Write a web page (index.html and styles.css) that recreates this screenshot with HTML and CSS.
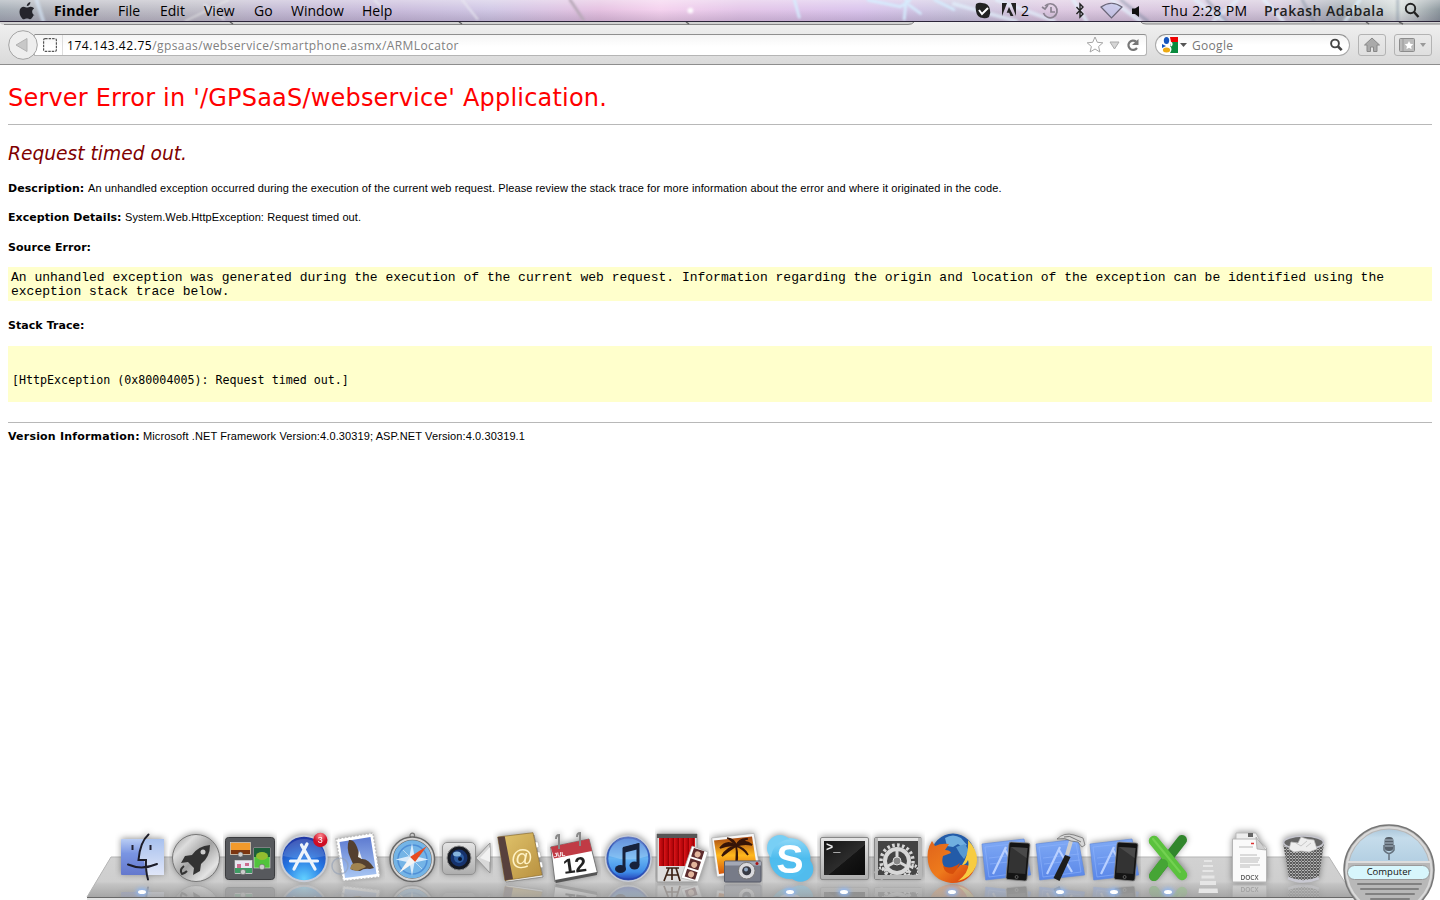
FILE: index.html
```html
<!DOCTYPE html>
<html lang="en">
<head>
<meta charset="utf-8">
<title>Request timed out.</title>
<link rel="stylesheet" href="styles.css">
</head>
<body>
<div class="screen">
  <header class="menubar">
    <svg class="streaks" width="1440" height="22" viewBox="0 0 1440 22">
      <g fill="none" stroke-linecap="round" class="soft">
        <path d="M4 0l7 22" stroke="#dcecff" stroke-width="4" opacity=".6"/>
        <path d="M160 22L205 0" stroke="#eef0ee" stroke-width="2" opacity=".6"/>
        <path d="M180 5l20 15M358 0l10 10M450 0l16 20" stroke="#eef0f4" stroke-width="2" opacity=".7"/>
        <path d="M563 0l14 21" stroke="#b8a9b8" stroke-width="3"/>
        <path d="M798 0l5 18M875 0l34 7 10-7M915 0l-2 20M918 5l12 9M945 0l20 10" stroke="#d5efff" stroke-width="3" opacity=".85"/>
        <path d="M965 4l65 18M1010 0l60 22M1090 0l14 22M1130 0l30 22M1218 0l30 22M1262 0l-25 22M1290 0l20 22M1375 22l15-22" stroke="#e4f4ff" stroke-width="4" opacity=".65"/>
        <path d="M1140 0l28 22M1230 0l20 22M1330 0l12 22M1430 0v22" stroke="#6d8296" stroke-width="3" opacity=".4"/>
      </g>
      <circle cx="689" cy="11" r="3" fill="#fff" opacity=".9" class="soft"/>
    </svg>
    <svg class="apple" width="18" height="20" viewBox="0 0 18 20"><path d="M12.4 1c.2 2-1.600 4.200-3.600 4.100C8.600 3.200 10.400 1.200 12.400 1zM15.600 14.300c-1 2.300-2.300 4-3.700 4-1.100 0-1.500-.7-2.900-.7s-1.900.7-2.900.7C3.800 18.300 1.500 14.200 1.500 10.700c0-3.300 2.200-5 4.200-5 1.300 0 2.300.8 3.300.8.900 0 2.300-.9 3.900-.8 1.200 0 2.500.7 3.200 1.800-2.900 1.700-2.400 5.700.6 6.800z" fill="#25252c"/></svg>
    <nav class="menus"><b>Finder</b><span>File</span><span>Edit</span><span>View</span><span>Go</span><span>Window</span><span>Help</span></nav>
    <div class="status">
      <svg width="130" height="22" viewBox="0 0 130 22" class="extras-a">
        <path d="M3 4q3-2 6-1 7 0 8 7 1 3-1 7-3 2-6 1-6 0-7-7-1-4 0-7z" fill="#222"/><path d="M6 10l3 4 6-6" stroke="#fff" stroke-width="2" fill="none"/>
        <path d="M29 3h5l-5 13zM38 3h5v13zM36 7l4.500 9h-3l-1.300-3.200h-2.500z" fill="#222"/>
        <g fill="none" stroke="#8a8290" stroke-width="1.700"><path d="M72 6a7 7 0 1 1-1.500 7M78 7v5h4"/><path d="M69 7l3 2 3-4"/></g>
        <path d="M103.500 7l6.500 7-3 3V4l3 3-6.500 7" fill="none" stroke="#222" stroke-width="1.400"/>
      </svg>
      <span class="two">2</span>
      <svg width="44" height="22" viewBox="0 0 44 22" class="wifi"><path d="M1 7Q11.500-.5 22 7L11.500 18z" fill="#b5c4ee" fill-opacity=".5" stroke="#696577" stroke-width="1.200"/><path d="M32 8.500h3L39 6v11l-4-3h-3z" fill="#111"/></svg>
      <span class="clock">Thu 2:28 PM</span>
      <b class="user">Prakash Adabala</b>
      <svg width="16" height="22" viewBox="0 0 16 22" class="spot"><circle cx="6.500" cy="8.500" r="4.700" fill="none" stroke="#222" stroke-width="1.900"/><path d="M10 12l4.500 5" stroke="#222" stroke-width="2.400"/></svg>
    </div>
  </header>

  <div class="toolbar">
    <svg class="tabs" width="1440" height="5" viewBox="0 0 1440 5"><path d="M0 0h914q-2 3-6 3H4Q1 3 0 1zM1141 0h299v2H1146q-4 0-5-2z" fill="#d2d2d2"/><path d="M4 2.500h904q4 0 6-2.500M1141 0q1 2 5 2h294" fill="none" stroke="#858585"/><path d="M230 0l3 2M459 0l3 2M686 0l3 2M1366 0l3 2M1399 0l4 2" stroke="#666" stroke-width="1.500"/></svg>
    <div class="nav">
      <svg class="back" width="31" height="31" viewBox="0 0 31 31"><circle cx="15" cy="15" r="14.300" fill="#eee" stroke="#a4a4a4"/><path d="M19 8.500v13L8 15z" fill="#c8c8c8" stroke="#b2b2b2"/></svg>
      <div class="url">
        <svg width="14" height="14" viewBox="0 0 14 14"><rect x=".6" y=".6" width="12.800" height="12.800" rx="1.500" fill="none" stroke="#555" stroke-width="1.200" stroke-dasharray="2.500 1"/></svg>
        <span class="address"><em>174.143.42.75</em>/gpsaas/webservice/smartphone.asmx/ARMLocator</span>
        <svg class="urlicons" width="56" height="18" viewBox="0 0 56 18"><path d="M9 1l2.300 5.300 5.500.5-4.200 3.700 1.300 5.500L9 13l-4.900 3 1.300-5.500L1.200 6.800l5.500-.5z" fill="#fff" stroke="#a5a5a5"/><path d="M24 6h9l-4.500 7z" fill="#d5d5d5" stroke="#aaa"/><path d="M50 5.500A4.700 4.700 0 1 0 51 12" fill="none" stroke="#777" stroke-width="2.200"/><path d="M52.500 3v6H46z" fill="#777"/></svg>
      </div>
      <div class="search">
        <svg width="26" height="18" viewBox="0 0 26 18"><rect x="0" y="1" width="16" height="16" rx="1.500" fill="#fff"/><path d="M8 1h8v5H9z" fill="#e00"/><path d="M9 6h7v11H8q3-4 0-7z" fill="#098b3e"/><ellipse cx="4.500" cy="4.500" rx="2.700" ry="3.500" fill="#1655bd"/><path d="M0 8l4 2-4 2z" fill="#1655bd"/><ellipse cx="4.500" cy="14" rx="3.600" ry="2.500" fill="#edaa13"/><path d="M7 7q4-1 2 3" stroke="#fff" stroke-width="2" fill="none"/><path d="M18 7h7l-3.500 4z" fill="#555"/></svg>
        <span>Google</span>
        <svg width="14" height="14" viewBox="0 0 14 14"><circle cx="6" cy="5.500" r="3.900" fill="none" stroke="#444" stroke-width="1.900"/><path d="M9 8.500l3.700 3.700" stroke="#444" stroke-width="2.600"/></svg>
      </div>
      <div class="tool home"><svg width="18" height="16" viewBox="0 0 18 16"><path d="M9 1l7.500 7H14v6.500h-3.500V10h-3v4.500H4V8H1.500z" fill="#aaa" stroke="#888"/></svg></div>
      <div class="tool marks"><svg width="28" height="16" viewBox="0 0 28 16"><rect x=".5" y="1.500" width="15" height="13" rx="1" fill="#bbb" stroke="#8c8c8c"/><path d="M4 2v12" stroke="#999"/><path d="M10 4l1.300 2.800 3 .4-2.200 2 .5 3.100L10 10.800l-2.600 1.500.5-3.100-2.200-2 3-.4z" fill="#fff"/><path d="M21 6h6l-3 4z" fill="#999"/></svg></div>
    </div>
  </div>

  <main class="page">
    <h1><span>Server Error in '/GPSaaS/webservice' Application.</span></h1>
    <hr>
    <h2>Request timed out.</h2>
    <p class="row desc"><b>Description:</b><span>An unhandled exception occurred during the execution of the current web request. Please review the stack trace for more information about the error and where it originated in the code.</span></p>
    <p class="row exc"><b>Exception Details:</b><span>System.Web.HttpException: Request timed out.</span></p>
    <p class="row src"><b>Source Error:</b></p>
    <div class="code source">An unhandled exception was generated during the execution of the current web request. Information regarding the origin and location of the exception can be identified using the<br>exception stack trace below.</div>
    <p class="row stk"><b>Stack Trace:</b></p>
    <div class="code trace">[HttpException (0x80004005): Request timed out.]</div>
    <hr class="last">
    <p class="row ver"><b>Version Information:</b><span>Microsoft .NET Framework Version:4.0.30319; ASP.NET Version:4.0.30319.1</span></p>
  </main>

  <footer class="dock">
    <svg class="shelf" width="1440" height="50" viewBox="0 0 1440 50">
      <defs>
        <linearGradient id="shelf" x2="0" y2="1"><stop offset="0" stop-color="#d2d2d2"/><stop offset=".62" stop-color="#cecece"/><stop offset=".68" stop-color="#c3c3c3"/><stop offset="1" stop-color="#a6a6a6"/></linearGradient>
      </defs>
      <path d="M111 7h1218l25 40H87z" fill="url(#shelf)"/><path d="M87 47L111 7h1218l25 40" fill="none" stroke="#b5b5b5"/><path d="M87 47.500h1267" stroke="#696969"/><path d="M87 49h1267" stroke="#e3e3e3" stroke-width="2"/>
      <g fill="#e6e6e6"><path d="M1204 10h8v2h-8zM1203 15h10v2h-10zM1202.500 20h11v2h-11zM1201.500 25.500h13v3h-13zM1200 31h16v4h-16zM1199 38.500h18.500l.5 4.500h-19.500z"/></g>
    </svg>
    <svg width="0" height="0" class="defs">
      <defs>
        <linearGradient id="blue" x2="0" y2="1"><stop offset="0" stop-color="#b9cdf4"/><stop offset=".4" stop-color="#7a95e2"/><stop offset="1" stop-color="#6478cd"/></linearGradient>
        <linearGradient id="facer" x2="0" y2="1"><stop offset="0" stop-color="#a8c1ee"/><stop offset="1" stop-color="#e0e6f8"/></linearGradient>
        <linearGradient id="metal" x2="1" y2="1"><stop offset="0" stop-color="#909090"/><stop offset=".25" stop-color="#ddd"/><stop offset=".5" stop-color="#a2a2a2"/><stop offset=".78" stop-color="#e4e4e4"/><stop offset="1" stop-color="#888"/></linearGradient>
        <radialGradient id="orb" cy=".95" r=".95"><stop offset="0" stop-color="#62d0ff"/><stop offset=".5" stop-color="#2475e2"/><stop offset="1" stop-color="#2032a0"/></radialGradient>
        <linearGradient id="tunes" x2="0" y2="1"><stop offset="0" stop-color="#3a6fd0"/><stop offset=".5" stop-color="#67b3f2"/><stop offset=".8" stop-color="#3f8de8"/><stop offset="1" stop-color="#2136b0"/></linearGradient>
        <radialGradient id="red" cy=".2"><stop offset="0" stop-color="#ff8a91"/><stop offset="1" stop-color="#cf0d24"/></radialGradient>
        <linearGradient id="sky" x2="0" y2="1"><stop offset="0" stop-color="#5d7ad0"/><stop offset="1" stop-color="#a9c7f3"/></linearGradient>
        <linearGradient id="gold" x2="1" y2="1"><stop offset="0" stop-color="#e3c66e"/><stop offset="1" stop-color="#b78f3e"/></linearGradient>
        <linearGradient id="silver" x2="0" y2="1"><stop offset="0" stop-color="#e5e5e5"/><stop offset="1" stop-color="#adadad"/></linearGradient>
        <linearGradient id="black" x2="1" y2="1"><stop offset="0" stop-color="#151515"/><stop offset=".55" stop-color="#2c2c2c"/><stop offset=".56" stop-color="#151515"/><stop offset="1" stop-color="#0a0a0a"/></linearGradient>
        <linearGradient id="sunset" x2="0" y2="1"><stop offset="0" stop-color="#a44410"/><stop offset=".5" stop-color="#ffb81d"/><stop offset="1" stop-color="#d3560d"/></linearGradient>
        <linearGradient id="curtain" x2=".14" spreadMethod="repeat"><stop offset="0" stop-color="#d91519"/><stop offset=".7" stop-color="#b20409"/><stop offset="1" stop-color="#8a0003"/></linearGradient>
        <linearGradient id="skype" x2="0" y2="1"><stop offset="0" stop-color="#8bd6f7"/><stop offset=".5" stop-color="#4dbcee"/><stop offset="1" stop-color="#53c0f0"/></linearGradient>
        <linearGradient id="fox" x2="1" y2="1"><stop offset="0" stop-color="#e0641b"/><stop offset=".5" stop-color="#ee7b1c"/><stop offset="1" stop-color="#d3330a"/></linearGradient>
        <linearGradient id="print" x2="0" y2="1"><stop offset="0" stop-color="#80aaf5"/><stop offset="1" stop-color="#5986e8"/></linearGradient>
        <pattern id="mesh" width="3" height="3" patternUnits="userSpaceOnUse"><path d="M0 0l3 3M3 0L0 3" stroke="#555" stroke-width="1.100"/></pattern>
        <g id="plan"><path d="M3 14L45 9l6.700 36L6.700 50z" fill="url(#print)" stroke="#5c86dc" stroke-width=".6"/><path d="M6 17l37-4 5 29-38 5zM10 28l36-4M11 34l36-4" fill="none" stroke="#8fb3fb" stroke-width=".6"/><path d="M14 44L27 17M26 20l13 22" stroke="#b9d0ff" stroke-width="2.200"/></g>
        <g id="phone"><path d="M32 12l17 1q2 0 2 2l-3 34q0 2-2 2l-17-1.500q-2 0-2-2L30 14q0-2 2-2z" fill="#141414" stroke="#888" stroke-width=".8"/><path d="M31.500 17l17 1-2.200 26-17-1.200z" fill="#333"/><path d="M32 17l16.500 1-1 10z" fill="#494949"/><circle cx="37.600" cy="47" r="1.500" fill="none" stroke="#888" stroke-width=".6"/></g>
      </defs>
    </svg>
    <div class="icons">
      <div class="app on"><svg viewBox="0 0 54 54"><rect x="6" y="9" width="43" height="36" rx="1" fill="url(#blue)"/><path d="M28 9h21v36H31l-2-16h-5q0-12 4-20z" fill="url(#facer)"/><path d="M17.500 15v5M35.500 15v5" stroke="#223" stroke-width="2"/><path d="M33.500 4q-8 9-9.500 15.500h7.500q-1 20 2 30M13 34q14 7 29 0" transform="translate(-.5)" fill="none" stroke="none"/><path d="M33.500 4.500Q25 12 23.500 30h7.500q-.5 11 2 19.500M13 34.500q14 6 29-.5" fill="none" stroke="#1c1c28" stroke-width="2" stroke-linecap="round"/></svg></div>
      <div class="app"><svg viewBox="0 0 54 54"><circle cx="27" cy="28" r="23.500" fill="url(#metal)" stroke="#777"/><path d="M41 15q-12 1-18 10l-7 1-4 7 7-1 6 6-1 7 7-4 1-7q9-7 9-19z" fill="#333"/><path d="M15 36q-5 4-2 8 3-1 5-3" fill="none" stroke="#333" stroke-width="2"/><circle cx="34" cy="22" r="2.500" fill="#ccc"/></svg></div>
      <div class="app"><svg viewBox="0 0 54 54"><rect x="2.500" y="7.500" width="49" height="42" rx="3" fill="#57595d" stroke="#3a3b3e"/><rect x="7.500" y="12.500" width="20" height="12" fill="#f29a2b" stroke="#ddd" stroke-width=".6"/><path d="M8 20h19v4H8z" fill="#7b3510"/><rect x="31" y="18" width="16" height="20" fill="#52c43c" stroke="#ddd" stroke-width=".6"/><path d="M31 18h16v9H31z" fill="#1d5f3a"/><ellipse cx="39" cy="26" rx="6" ry="4" fill="#93bd30"/><rect x="12" y="30.500" width="17" height="13" fill="#e9e8f2" stroke="#ddd" stroke-width=".6"/><path d="M12 38h17v5H12z" fill="#3f9c64"/><path d="M14 34h4v4h-4zM22 33h4v3h-4z" fill="#cc6d8f"/><g fill="#ccc" stroke="#555" stroke-width=".5"><circle cx="17.500" cy="24.500" r="2.500"/><circle cx="39" cy="37" r="2.800"/><circle cx="20" cy="42" r="2.700"/></g></svg></div>
      <div class="app"><svg viewBox="0 0 54 54"><circle cx="27" cy="28.500" r="22.700" fill="url(#orb)" stroke="#c8cdd8" stroke-width="2"/><path d="M6 26a21.500 21.500 0 0 1 42 0q-21 5-42 0z" fill="#fff" opacity=".15"/><g stroke="#eef4fb" stroke-width="3.200" stroke-linecap="round"><path d="M13.500 31h27M30 14L17 39M24.500 15L38 39"/></g><circle cx="43.300" cy="10" r="7.200" fill="url(#red)"/><text x="43.300" y="13.300" class="badge">3</text></svg></div>
      <div class="app"><svg viewBox="0 0 54 54"><path d="M5 9l37-6 7 44-37 4z" fill="#fff" stroke="#bbb" stroke-width="1.500" stroke-dasharray="2 1.500"/><path d="M8.500 12L39.500 7l6 37-31.500 4z" fill="url(#sky)"/><path d="M18 10q5-1 8 7l4 12q7-1 13 9l-4 1q-6-1-10 2l-8-1q-3-3 1-6l-3-7q-4-9-1-17z" fill="#54402f"/><path d="M21 34q9-3 14 3l-9 4-7-2z" fill="#a18450"/><path d="M28 20l3 9-4-2z" fill="#eee"/><circle cx="9" cy="36" r="8" fill="none" stroke="#919eb4" stroke-width="1.500" opacity=".6"/></svg></div>
      <div class="app"><svg viewBox="0 0 54 54"><circle cx="27.300" cy="5.500" r="2.300" fill="none" stroke="#777" stroke-width="1.200"/><circle cx="27.300" cy="29.300" r="21" fill="#74b4e6" stroke="#666" stroke-width="4"/><circle cx="27.300" cy="29.300" r="20.500" fill="none" stroke="#d5d5d5" stroke-width="2"/><circle cx="27.500" cy="29.500" r="14.500" fill="none" stroke="#4f8fd6" stroke-width="1.500"/><path d="M27 13l2.500 13 14 3.500-14 3L27 46l-2.500-13.500-14-3 14-3.500z" fill="#d9ebfb"/><path d="M18 20l19 19M37 20L18 39" stroke="#b9d9f3"/><path d="M42 16L25 27l5 5z" fill="#e74b20"/><path d="M14 43l11-16 5 5z" fill="#f4f4f4"/></svg></div>
      <div class="app"><svg viewBox="0 0 54 54"><path d="M37 28L51 13v30z" fill="#d8d8d8" stroke="#949494"/><path d="M41 28l10-11v15z" fill="#f1f1f1"/><rect x="3.500" y="12.500" width="33" height="32" rx="4.500" fill="url(#silver)" stroke="#929292"/><circle cx="20" cy="28" r="12" fill="#151820" stroke="#888"/><circle cx="20" cy="28" r="8.500" fill="#16326c"/><circle cx="20" cy="28" r="5" fill="#2c5ca0"/><ellipse cx="18" cy="24" rx="4" ry="2.500" fill="#86b4dd"/><circle cx="21" cy="29" r="2" fill="#061330"/></svg></div>
      <div class="app"><svg viewBox="0 0 54 54"><path d="M41 5l9 42-37 5-1-3z" fill="#eee" stroke="#777" stroke-width=".7"/><path d="M42 12l3 0 1 5-3 1zM44 22l3 0 1 5-3 1zM46 32l3 0 1 5-3 1z" fill="#fff" stroke="#aaa" stroke-width=".5"/><path d="M4.700 7L40 2.700 49 45 12 50.500z" fill="url(#gold)" stroke="#816124" stroke-width=".6"/><path d="M4.700 7l7-.8L20 49l-8 1.500z" fill="#58413d"/><text x="29" y="35" class="at">@</text></svg></div>
      <div class="app"><svg viewBox="0 0 54 54"><path d="M3.700 17L42 9l8.500 34L8 52z" fill="#fff" stroke="#777"/><path d="M3.700 17L42 9l3 12-38 7.500z" fill="#c03b45"/><path d="M8 50l42-8v3L9 53z" fill="#555"/><path d="M12 19V5q-3 0-3 4M33 16V3q-3 0-3 4" fill="none" stroke="#888" stroke-width="2"/><g transform="rotate(-8 27 30)"><text x="13.500" y="24.500" class="jul">JUL</text><text x="27" y="42.500" class="day">12</text></g></svg></div>
      <div class="app"><svg viewBox="0 0 54 54"><circle cx="27.300" cy="28.500" r="22.500" fill="url(#tunes)" stroke="#c8cdd8" stroke-width="2"/><circle cx="27.300" cy="28.500" r="21" fill="none" stroke="#2340a8" stroke-width="2" opacity=".7"/><path d="M8 26a19.500 19.500 0 0 1 39 0q-19 7-39 0z" fill="#fff" opacity=".2"/><path d="M23 40V19l14-4v20" fill="none" stroke="#17223c" stroke-width="3"/><path d="M22 17l16-4v6l-16 4z" fill="#17223c"/><ellipse cx="19.500" cy="39" rx="5.500" ry="4" fill="#17223c"/><ellipse cx="33.500" cy="35.500" rx="5" ry="4" fill="#17223c"/></svg></div>
      <div class="app"><svg viewBox="0 0 54 54"><path d="M2 4h40v48H2z" fill="#ddd" stroke="#999"/><path d="M2 4h40v4H2z" fill="#555"/><path d="M4 8h36v28H4z" fill="url(#curtain)"/><path d="M11 38h13M14 38L9 51M21 38l4 13M17 38v12M11 45h12" stroke="#3c2316" stroke-width="1.700"/><path d="M37 16l16 6-10 30-17-4z" fill="#fff" stroke="#aaa" stroke-width=".7"/><g transform="rotate(18 40 34)"><path d="M34 19h11v9H34zM34 30h11v9H34zM34 41h11v8H34z" fill="#5d2c2e"/><g fill="#e3b59c"><circle cx="39.500" cy="24" r="3"/><circle cx="39.500" cy="35" r="3"/><circle cx="39.500" cy="45" r="3"/></g></g></svg></div>
      <div class="app"><svg viewBox="0 0 54 54"><path d="M2.700 8L45 3.300 51 40 8 47z" fill="#f6f6f6" stroke="#aaa" stroke-width=".7"/><path d="M5 10.500l38-4L48 38l-38 6z" fill="url(#sunset)"/><path d="M26 40q4-12 1-24M27 16q-9-7-16 2 9-4 16-2 8-8 16-1-8-2-16 1-9 1-14 10 9-7 14-10 8 1 12 9-5-7-12-9-1-7-9-8M27 16q3-8 12-7" fill="#371508" stroke="#371508" stroke-width="1.700"/><rect x="15.500" y="31" width="36.500" height="21" rx="1" fill="#777b88" stroke="#555966"/><path d="M16 31.500h36v4H16z" fill="#a3a8b5"/><circle cx="37.700" cy="40.700" r="8.300" fill="#d9d9dd" stroke="#777"/><circle cx="37.700" cy="40.700" r="4.500" fill="#373a44"/><circle cx="37" cy="39.500" r="2" fill="#90a7c2"/><circle cx="48" cy="33.500" r="1.500" fill="#a11"/></svg></div>
      <div class="app on"><svg viewBox="0 0 54 54"><circle cx="27" cy="28.500" r="20.500" fill="url(#skype)"/><circle cx="17" cy="18" r="13" fill="#78cff5"/><circle cx="37.500" cy="39" r="12.800" fill="#51bced"/><circle cx="27" cy="28.500" r="19" fill="url(#skype)"/><text x="27" y="43" class="skype">S</text></svg></div>
      <div class="app on"><svg viewBox="0 0 54 54"><rect x="3.500" y="7.500" width="48" height="42" rx="1.500" fill="url(#silver)" stroke="#888"/><rect x="7" y="11" width="41" height="34" fill="url(#black)"/><text x="9" y="21" class="prompt">&gt;_</text></svg></div>
      <div class="app"><svg viewBox="0 0 54 54"><rect x="3.500" y="7.500" width="47" height="42" rx="1.500" fill="url(#silver)" stroke="#888"/><rect x="7" y="11" width="40" height="34" fill="#444"/><g fill="none" stroke="#d7d7d7"><circle cx="26" cy="31" r="12" stroke-width="4"/><circle cx="26" cy="31" r="16" stroke-width="3.500" stroke-dasharray="2.600 2.400"/><path d="M26 31V19M26 31l11 6M26 31l-11 6" stroke-width="3"/><circle cx="10" cy="43" r="5" stroke-width="3" stroke-dasharray="2 1"/><circle cx="42" cy="41" r="5.500" stroke-width="3" stroke-dasharray="2 1"/></g><circle cx="26" cy="31" r="4" fill="#888" stroke="#ddd"/><path d="M4 45h46v4H4zM47 8h4v41h-4zM4 8h3v41H4z" fill="#b7b7b7"/></svg></div>
      <div class="app on"><svg viewBox="0 0 54 54"><circle cx="28" cy="25.500" r="22" fill="#235ba8"/><path d="M20 8q8-5 16 0l6 7-5 2-4-3-5 3-6-1z" fill="#70afe0"/><path d="M31 17l9-3 4 7-5 8-4-5z" fill="#5799d2"/><path d="M46 15q8 13 4 23-7 16-24 15Q6 50 3 32q-2-12 4-21l3 5q6-3 14-2l-4 6q5 0 6 3l-8 3q-3 11 7 14 7 1 10-5 5-1 9 1 4-7 2-22z" fill="url(#fox)"/><path d="M18 36q8 4 17-3l-3 6-4 5q-8 0-10-8z" fill="#d74f0c"/><path d="M43 10q12 13 8 26-5 12-18 15 13-10 10-21-2 5-6 5 7-10 6-25z" fill="#f7cc41"/></svg></div>
      <div class="app"><svg viewBox="0 0 54 54"><use href="#plan"/><use href="#phone"/></svg></div>
      <div class="app on"><svg viewBox="0 0 54 54"><use href="#plan"/><path d="M38 11L34 25" stroke="#ccc" stroke-width="4"/><path d="M32 25l5.500 2-11 24-6-3z" fill="#1d1d1d"/><path d="M24 9q7-7 17-4l9 3 2 7-3 2-4-5-7-1q-6-4-14-2z" fill="#d5d5d5" stroke="#666" stroke-width=".7"/><path d="M31 7q6-2 11 2l6 3" stroke="#777" fill="none"/></svg></div>
      <div class="app on"><svg viewBox="0 0 54 54"><use href="#plan"/><use href="#phone"/></svg></div>
      <div class="app on"><svg viewBox="0 0 54 54"><path d="M41 10L13 46" stroke="#31862c" stroke-width="10" stroke-linecap="round"/><path d="M13 11l28 34" stroke="#5bc23d" stroke-width="10.500" stroke-linecap="round"/><path d="M12 9l27 33" stroke="#8ce066" stroke-width="2" stroke-linecap="round" opacity=".5"/><path d="M22 34L13 46" stroke="#46a535" stroke-width="10" stroke-linecap="round"/></svg></div>
      <div class="app doc"><svg viewBox="0 0 54 54"><path d="M14 3h20l8 16-28-5z" fill="#eee" stroke="#bbb"/><path d="M10.500 9h24l10 9v34h-34z" fill="#fafafa" stroke="#b5b5b5"/><path d="M34 7l1 12 9 1z" fill="#d0d0d0" stroke="#999" stroke-width=".6"/><path d="M17 17h14M18 25h17M18 28h20M18 30h19M18 32h18M18 35h20M18 37h10" stroke="#aaa" stroke-width=".8"/><path d="M29 13.500h3" stroke="#d33" stroke-width="1.500"/><path d="M26 3h5v4h-5z" fill="#666"/><text x="27.500" y="49.500" class="docx">DOCX</text></svg></div>
      <div class="app"><svg viewBox="0 0 54 54"><path d="M7 13h41l-5 35q-15 8-30 0z" fill="#ddd"/><path d="M7 13h41l-5 35q-15 8-30 0z" fill="url(#mesh)"/><ellipse cx="27.500" cy="12.500" rx="20" ry="6.500" fill="#666" stroke="#c5c5cd" stroke-width="1.700"/><path d="M13 19l2-7 7 1 3-6 6 2 7 1 3 9-8 3-8-1-7 1z" fill="#eee" stroke="#bbb" stroke-width=".7"/><path d="M20 13l5 3 6-5M30 17l5-4" fill="none" stroke="#c8c8c8"/><path d="M12 48q15 7 31 0" fill="none" stroke="#c9c9d2" stroke-width="2.500"/></svg></div>
    </div>
    <div class="speech">
      <svg width="94" height="78" viewBox="0 0 94 78"><defs><clipPath id="dome"><circle cx="47" cy="48" r="40.500"/></clipPath><linearGradient id="glass" x2="0" y2="1"><stop offset="0" stop-color="#99b7ce"/><stop offset=".4" stop-color="#c5dceb"/><stop offset="1" stop-color="#b3cfe2"/></linearGradient></defs><circle cx="47" cy="48" r="45" fill="#b8b8b8" stroke="#777" stroke-width="1.500"/><circle cx="47" cy="48" r="42.500" fill="none" stroke="#d9d9d9" stroke-width="2"/><path clip-path="url(#dome)" d="M4 0h86v40H4z" fill="url(#glass)"/><path d="M6 40h82" stroke="#ddd" stroke-width="2"/><rect x="5.500" y="43.500" width="82" height="14" rx="7" fill="#d7f6fc" stroke="#999"/><g stroke="#818181" stroke-width="2" stroke-linecap="round"><path d="M16 62h63M19 67h57M24 72h48M29 77h38"/></g><rect x="42.500" y="15" width="9" height="14" rx="4" fill="#56606a"/><path d="M43 18h8M43 21h8M43 24h8" stroke="#aebdcb"/><path d="M42 23v5q5 7 10 0v-5M47 32v6" stroke="#65727e" stroke-width="1.500" fill="none"/></svg>
      <span>Computer</span>
    </div>
  </footer>
</div>
</body>
</html>
```
FILE: styles.css
```css
* { box-sizing: border-box; }
body { margin: 0; background: #fff; color: #000; font-family: "DejaVu Sans", Verdana, sans-serif; overflow: hidden; }
svg { display: block; flex: none; }
.screen { width: 1440px; height: 900px; display: flex; flex-direction: column; }

.menubar {
  position: relative; height: 22px; display: flex; align-items: center;
  border-bottom: 1px solid #2b2439; white-space: nowrap;
  font-family: "Open Sans", "Noto Sans", sans-serif; font-size: 14px; line-height: 21px;
  background:
    linear-gradient(rgba(255,255,255,.35), rgba(255,255,255,0) 45%, rgba(40,20,60,.16)),
    linear-gradient(90deg, #a8b0b8, #bcbcc4 80px, #c2c0ca 200px, #c6bdd6 270px, #cbbedd 400px, #d2c9e6 490px, #e6c3e2 600px, #f5d3ef 660px, #e4c7e9 740px, #dbc6ed 860px, #cdc8e0 960px, #dfcbe3 1050px, #dac9e0 1180px, #d5c9dc 1280px, #a8b0b7 1340px, #dce2e0 1400px, #8e999f 1440px);
}
.streaks { position: absolute; inset: 0; height: 21px; }
.soft { filter: blur(1.2px); }
.apple { margin-left: 18px; position: relative; }
.menus { position: relative; margin-left: 18px; display: grid; grid-template-columns: 64px 42px 44px 50px 37px 71px 40px; }
.menus b { font-weight: 700; letter-spacing: .1px; }
.status { position: relative; margin-left: auto; width: 467px; height: 21px; display: grid; grid-template-columns: 46px 81px 62px 102px 140px 36px; }
.extras-a { grid-row: 1; grid-column: 1; }
.two { grid-row: 1; grid-column: 2; padding-left: 2px; }
.clock { letter-spacing: .42px; }
.user { color: #222; font-weight: 600; letter-spacing: .47px; }

.toolbar { height: 43px; background: linear-gradient(#f0f0f0, #dadada); border-bottom: 1px solid #8d8d8d; }
.tabs { height: 5px; }
.nav { display: flex; align-items: center; height: 36px; padding-left: 8px; font-family: "Open Sans", "Noto Sans", sans-serif; font-size: 12px; }
.back { z-index: 1; }
.url { display: flex; align-items: center; height: 22px; width: 1113px; margin-left: -5px; padding-left: 8px; border: 1px solid #b5b5b5; border-top-color: #8f8f8f; border-radius: 0 3px 3px 0; background: linear-gradient(#f5f5f5, #fff 60%); }
.address { margin-left: 5px; padding: 1px 0 0 4px; border-left: 1px solid #ddd; line-height: 19px; color: #808080; letter-spacing: .41px; }
.address em { font-style: normal; color: #000; letter-spacing: .55px; }
.urlicons { margin-left: auto; margin-right: 4px; }
.search { display: flex; align-items: center; width: 195px; height: 22px; margin-left: 8px; padding: 0 6px; border: 1px solid #a9a9a9; border-top-color: #8f8f8f; border-radius: 11px; background: linear-gradient(#f3f3f3, #fff 50%); color: #777; }
.search span { flex: 1; margin-left: 4px; letter-spacing: .3px; }
.tool { display: grid; place-items: center; height: 22px; border: 1px solid #b3b3b3; border-radius: 3px; }
.home { width: 28px; margin-left: 8px; }
.marks { width: 38px; margin-left: 8px; }

.page { flex: 1; padding: 0 8px; }
h1 { margin: 0; height: 59px; padding-top: 19px; font-size: 24px; line-height: 29px; font-weight: 400; color: #f00; letter-spacing: .2px; }
hr { margin: 0; height: 1px; border: 0; background: #b8b8b8; }
h2 { margin: 0; height: 52px; padding-top: 17px; font-size: 18.67px; line-height: 23px; font-weight: 400; font-style: italic; color: #800000; }
.row { display: flex; margin: 0; font-size: 11px; line-height: 14px; white-space: nowrap; height: 29px; padding-top: 4px; }
.row b { padding-top: 1px; letter-spacing: .06px; }
.row span { font-family: "Liberation Sans", Arial, sans-serif; font-size: 11px; letter-spacing: .09px; }
.desc b { width: 80px; }
.exc b { width: 117px; }
.ver b { width: 135px; letter-spacing: .2px; }
.ver span { letter-spacing: .11px; }
.src { height: 32px; padding-top: 5px; }
.code { background: #ffffcc; font-family: "Liberation Mono", monospace; white-space: nowrap; }
.source { height: 34px; padding: 4px 3px 2px; font-size: 13px; line-height: 14px; }
.stk { height: 45px; padding-top: 17px; }
.trace { height: 56px; padding: 27px 4px 0; font-family: "DejaVu Sans Mono", monospace; font-size: 11.66px; line-height: 14px; }
.last { margin-top: 20px; }
.ver { padding-top: 6px; }

.dock { position: relative; height: 78px; display: flex; }
.shelf { position: absolute; left: 0; bottom: 0; }
.defs { position: absolute; }
.icons { position: relative; display: flex; width: 1343px; padding: 8px 0 0 115px; }
.app { position: relative; width: 54px; height: 67px; flex: none; overflow: visible; clip-path: inset(-6px 0 0 0); }
.app svg { width: 54px; height: 54px; filter: drop-shadow(0 -1px 3px rgba(0,0,0,.4)); -webkit-box-reflect: below -1px linear-gradient(transparent 55%, rgba(0,0,0,.3)); }
.on::after { content: ""; position: absolute; left: 23px; top: 60px; width: 8px; height: 4px; border-radius: 50%; background: #fff; box-shadow: 0 0 4px 2px #8fb8f5; }
.doc { margin-left: 27px; }
.speech { position: relative; display: grid; margin-left: -1px; width: 94px; height: 78px; overflow: hidden; }
.speech svg, .speech span { grid-area: 1 / 1; }
.speech span { position: relative; font: 9.5px/14px "Open Sans", sans-serif; padding-top: 43px; text-align: center; color: #111; }
text { text-anchor: middle; font-family: "Liberation Sans", sans-serif; }
.badge { font-size: 9px; fill: #fff; }
.at { font-size: 22px; fill: #fff2c4; }
.jul { font-size: 6px; font-weight: 700; fill: #fff; }
.day { font-size: 21px; font-weight: 700; fill: #222; }
.skype { font-size: 41px; font-weight: 700; fill: #fff; }
.prompt { font: 700 12px "Liberation Mono", monospace; fill: #eee; text-anchor: start; }
.docx { font: 600 6.5px "Open Sans", sans-serif; fill: #555; }
```
